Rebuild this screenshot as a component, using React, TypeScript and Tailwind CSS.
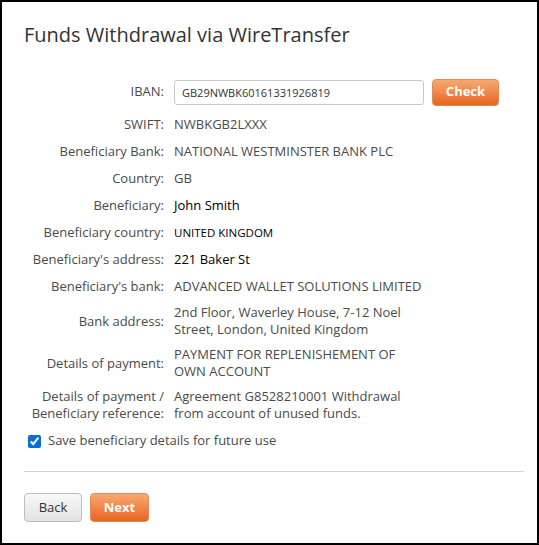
import React, { useState } from 'react';

const FONT = { fontFamily: '"Segoe UI", "Open Sans", "Noto Sans", sans-serif' };

interface RowProps {
  label: React.ReactNode;
  children: React.ReactNode;
  tall?: boolean;
}

function Row({ label, children, tall }: RowProps) {
  return (
    <div className={`flex items-center ${tall ? 'h-[42px]' : 'h-[27px]'}`}>
      <div className="w-[140px] shrink-0 text-right leading-[17px] text-[#4a4a4a] whitespace-nowrap">{label}</div>
      <div className="ml-[10px] leading-[17px] text-[#4a4a4a] whitespace-nowrap">{children}</div>
    </div>
  );
}

export default function App() {
  const [iban, setIban] = useState('GB29NWBK60161331926819');
  const [save, setSave] = useState(true);

  return (
    <div style={FONT} className="w-[539px] h-[545px] border-2 border-black bg-white text-[13px]">
      <div className="pl-[22px] pr-[13px]">
        <h1 className="pt-[20px] text-[20px] leading-[26px] text-[#333]">Funds Withdrawal via WireTransfer</h1>

        <div className="mt-[21px]">
          <div className="flex items-center h-[42px] pt-[4px]">
            <div className="w-[140px] shrink-0 text-right text-[#4a4a4a]">IBAN:</div>
            <input
              value={iban}
              onChange={e => setIban(e.target.value)}
              className="ml-[10px] w-[250px] h-[25px] rounded-[3px] border border-[#c8c8c8] px-[7px] text-[11px] text-[#333] outline-none"
            />
            <button className="ml-[8px] h-[27px] w-[67px] rounded-[4px] border border-[#e08a55] bg-gradient-to-b from-[#f8a870] to-[#e8641a] text-[13px] font-bold text-white">
              Check
            </button>
          </div>

          <Row label="SWIFT:">NWBKGB2LXXX</Row>
          <Row label="Beneficiary Bank:">NATIONAL WESTMINSTER BANK PLC</Row>
          <Row label="Country:">GB</Row>
          <Row label="Beneficiary:"><span className="text-[13px] text-black">John Smith</span></Row>
          <Row label="Beneficiary country:"><span className="text-[11.5px] text-black">UNITED KINGDOM</span></Row>
          <Row label="Beneficiary's address:"><span className="text-[13px] text-black">221 Baker St</span></Row>
          <Row label="Beneficiary's bank:">ADVANCED WALLET SOLUTIONS LIMITED</Row>
          <Row label="Bank address:" tall>
            <div>2nd Floor, Waverley House, 7-12 Noel</div>
            <div>Street, London, United Kingdom</div>
          </Row>
          <Row label="Details of payment:" tall>
            <div>PAYMENT FOR REPLENISHEMENT OF</div>
            <div>OWN ACCOUNT</div>
          </Row>
          <Row
            tall
            label={
              <>
                <div>Details of payment /</div>
                <div>Beneficiary reference:</div>
              </>
            }
          >
            <div>Agreement G8528210001 Withdrawal</div>
            <div>from account of unused funds.</div>
          </Row>

          <label className="flex items-center h-[30px] pl-[4px] text-[#4a4a4a]">
            <input
              type="checkbox"
              checked={save}
              onChange={e => setSave(e.target.checked)}
              className="h-[13px] w-[13px] accent-[#0a6cd6]"
            />
            <span className="ml-[7px]">Save beneficiary details for future use</span>
          </label>
        </div>

        <div className="mt-[15px] border-t border-[#d4d4d4]" />

        <div className="mt-[21px] flex gap-[8px]">
          <button className="h-[29px] w-[58px] rounded-[4px] border border-[#bdbdbd] bg-gradient-to-b from-[#f8f8f8] to-[#e2e2e2] text-[13px] text-[#333]">
            Back
          </button>
          <button className="h-[29px] w-[59px] rounded-[4px] border border-[#e08a55] bg-gradient-to-b from-[#f8a870] to-[#e8641a] text-[13px] font-bold text-white">
            Next
          </button>
        </div>
      </div>
    </div>
  );
}
